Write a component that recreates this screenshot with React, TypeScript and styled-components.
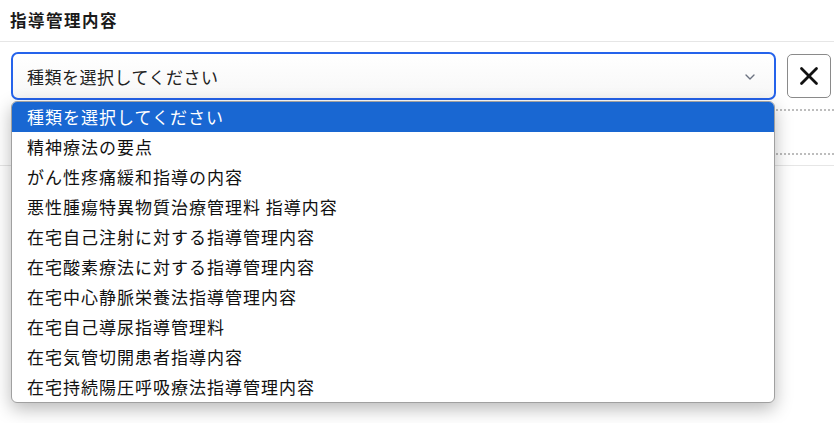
import styled, { createGlobalStyle } from "styled-components";
import { ChevronDown, X } from "lucide-react";

const GlobalStyle = createGlobalStyle`
    body {
        margin: 0;
        background: #ffffff;
        font-family: "Noto Sans CJK JP", "Noto Sans", sans-serif;
        color: #1a1a1a;
    }
`;

const Page = styled.div`
    position: relative;
    width: 834px;
    height: 423px;
    overflow: hidden;
`;

const Header = styled.div`
    height: 42px;
    box-sizing: border-box;
    padding: 8px 10px 0;
    border-bottom: 1px solid #e6e6e6;
    font-size: 16.5px;
    letter-spacing: 1.5px;
    font-weight: 700;
    line-height: 24px;
`;

const SelectRow = styled.div`
    display: flex;
    align-items: center;
    gap: 11px;
    padding: 10px 3px 0 11px;
`;

const SelectBox = styled.div`
    flex: 1;
    height: 48px;
    box-sizing: border-box;
    border: 2px solid #2563eb;
    border-radius: 7px;
    display: flex;
    align-items: center;
    justify-content: space-between;
    padding: 1px 16px 0 14px;
    font-size: 17px;
    letter-spacing: 0.5px;
    color: #222;
    background: linear-gradient(#ffffff, #f7f7f7);
`;

const ClearButton = styled.button`
    width: 44px;
    height: 44px;
    box-sizing: border-box;
    border: 1px solid #8a8a8a;
    border-radius: 5px;
    background: #fff;
    display: flex;
    align-items: center;
    justify-content: center;
    padding: 0;
`;

const Table = styled.div`
    margin: 9px 0 0 11px;
    height: 42px;
    border-top: 2px dotted #bdbdbd;
    border-bottom: 2px dotted #bdbdbd;
`;

const Rule = styled.div`
    margin-top: 10px;
    border-top: 1px solid #e6e6e6;
`;

const Dropdown = styled.ul`
    position: absolute;
    left: 11px;
    top: 101px;
    width: 764px;
    margin: 0;
    padding: 0;
    list-style: none;
    background: #fff;
    border: 1px solid #a0a0a0;
    border-radius: 6px;
    overflow: hidden;
    box-sizing: border-box;
    box-shadow: 0 6px 18px rgba(0, 0, 0, 0.28);
`;

const Option = styled.li<{ $active?: boolean }>`
    height: 30px;
    line-height: 30px;
    padding-left: 15px;
    font-size: 17px;
    letter-spacing: 1px;
    white-space: nowrap;
    background: ${(p) => (p.$active ? "#1967d2" : "transparent")};
    color: ${(p) => (p.$active ? "#ffffff" : "#111")};
`;

const options = [
    "種類を選択してください",
    "精神療法の要点",
    "がん性疼痛緩和指導の内容",
    "悪性腫瘍特異物質治療管理料 指導内容",
    "在宅自己注射に対する指導管理内容",
    "在宅酸素療法に対する指導管理内容",
    "在宅中心静脈栄養法指導管理内容",
    "在宅自己導尿指導管理料",
    "在宅気管切開患者指導内容",
    "在宅持続陽圧呼吸療法指導管理内容",
];

export default function App() {
    return (
        <Page>
            <GlobalStyle />
            <Header>指導管理内容</Header>
            <SelectRow>
                <SelectBox>
                    <span>種類を選択してください</span>
                    <ChevronDown size={16} color="#6b7280" strokeWidth={2} />
                </SelectBox>
                <ClearButton>
                    <X size={30} color="#111" strokeWidth={2.2} />
                </ClearButton>
            </SelectRow>
            <Table />
            <Rule />
            <Dropdown>
                {options.map((o, i) => (
                    <Option key={o} $active={i === 0}>
                        {o}
                    </Option>
                ))}
            </Dropdown>
        </Page>
    );
}
